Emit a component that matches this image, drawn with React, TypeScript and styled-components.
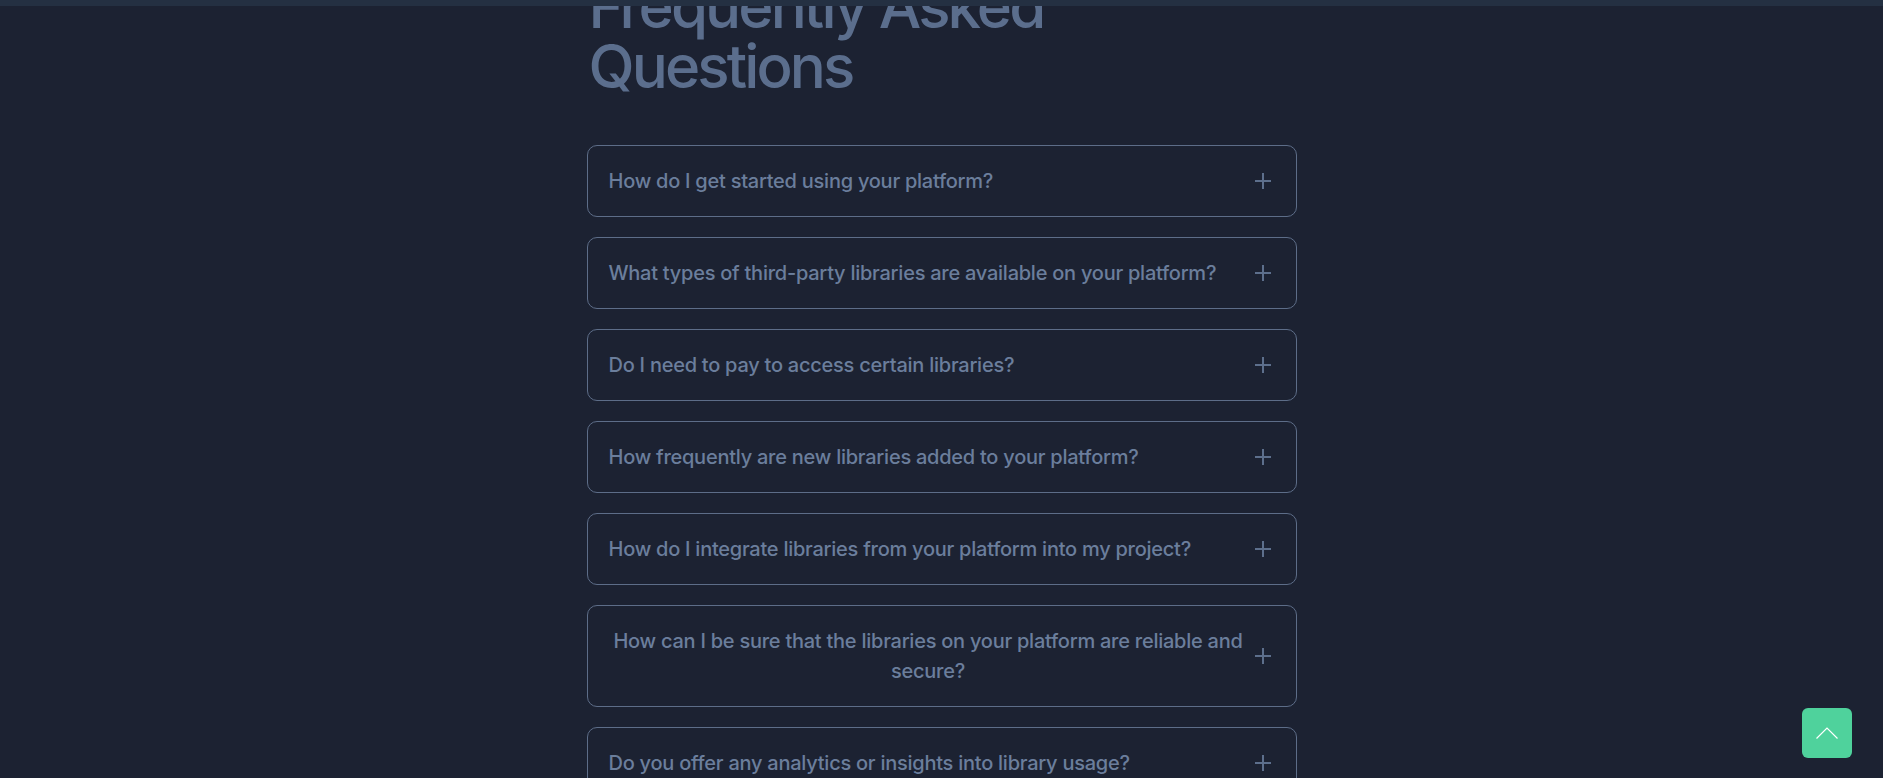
import React from "react";
import styled, { createGlobalStyle } from "styled-components";

const GlobalStyle = createGlobalStyle`
  html, body {
    margin: 0;
    padding: 0;
    background: #1c2232;
    overflow: hidden;
  }
  body {
    font-family: Inter, "Noto Sans", sans-serif;
  }
  * { box-sizing: border-box; }
`;

const TopBar = styled.div`
  position: fixed;
  top: 0;
  left: 0;
  right: 0;
  height: 6px;
  background: #243042;
  z-index: 10;
`;

const Page = styled.main`
  min-height: 778px;
  display: flex;
  justify-content: center;
`;

const Section = styled.section`
  width: 710px;
  margin-top: -24px;
  display: flex;
  flex-direction: column;
`;

const Heading = styled.h2`
  margin: 0 0 49px 2px;
  font-family: Inter, sans-serif;
  font-size: 60px;
  line-height: 60px;
  font-weight: 500;
  letter-spacing: -2.9px;
  color: #5b6e8d;
`;

const List = styled.div`
  display: flex;
  flex-direction: column;
  gap: 20px;
`;

const Item = styled.div`
  border: 1px solid #5d6d88;
  border-radius: 10px;
`;

const Trigger = styled.button`
  width: 100%;
  display: flex;
  align-items: center;
  justify-content: space-between;
  gap: 6px;
  padding: 20px 24px 20px 21px;
  background: transparent;
  border: none;
  cursor: pointer;
  text-align: center;
  font-family: Inter, sans-serif;
  font-size: 20px;
  line-height: 30px;
  font-weight: 500;
  letter-spacing: -0.25px;
  color: #6b7e9c;
`;

const Plus = styled.svg`
  flex: none;
  width: 18px;
  height: 18px;
  color: #5d6f8c;
`;

const BackToTop = styled.button`
  position: fixed;
  right: 31px;
  bottom: 20px;
  width: 50px;
  height: 50px;
  border-radius: 6px;
  border: none;
  background: #4fd29c;
  display: flex;
  align-items: center;
  justify-content: center;
  cursor: pointer;
`;

const questions = [
  "How do I get started using your platform?",
  "What types of third-party libraries are available on your platform?",
  "Do I need to pay to access certain libraries?",
  "How frequently are new libraries added to your platform?",
  "How do I integrate libraries from your platform into my project?",
  "How can I be sure that the libraries on your platform are reliable and secure?",
  "Do you offer any analytics or insights into library usage?",
];

export default function App() {
  return (
    <>
      <GlobalStyle />
      <TopBar />
      <Page>
        <Section>
          <Heading>
            Frequently Asked
            <br />
            Questions
          </Heading>
          <List>
            {questions.map((q) => (
              <Item key={q}>
                <Trigger>
                  <span>{q}</span>
                  <Plus viewBox="0 0 18 18" fill="none">
                    <path d="M9 1v16M1 9h16" stroke="currentColor" strokeWidth="2" />
                  </Plus>
                </Trigger>
              </Item>
            ))}
          </List>
        </Section>
      </Page>
      <BackToTop aria-label="Back to top">
        <svg width="24" height="14" viewBox="0 0 24 14" fill="none">
          <path d="M1.5 12.5L12 2l10.5 10.5" stroke="#ffffff" strokeWidth="1.2" />
        </svg>
      </BackToTop>
    </>
  );
}
